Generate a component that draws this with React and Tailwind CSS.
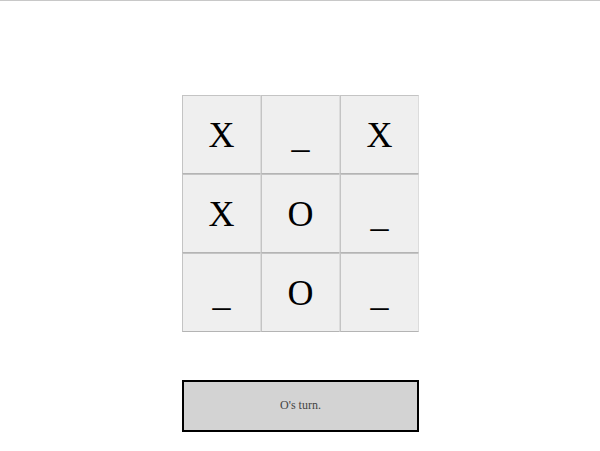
import React, { useState } from "react";

const initial = ["X", "_", "X", "X", "O", "_", "_", "O", "_"];

const App = () => {
    const [cells] = useState(initial);

    return (
        <div className="min-h-[451px] bg-white border-t border-[#c8c8c8] flex flex-col items-center pt-[94px]" style={{ fontFamily: '"Liberation Serif", serif' }}>
            <div className="grid grid-cols-[repeat(3,79px)] grid-rows-[repeat(3,79px)] ml-[1px]">
                {cells.map((c, i) => (
                    <button
                        key={i}
                        className="flex items-center justify-center bg-[#efefef] border border-t-[#c4c4c4] border-l-[#c4c4c4] border-r-[#dcdcdc] border-b-[#b4b4b4] text-[36px] leading-none text-black"
                    >
                        {c}
                    </button>
                ))}
            </div>
            <div className="mt-[48px] ml-[1px] w-[237px] h-[52px] border-2 border-black bg-[#d3d3d3] flex items-center justify-center pb-[2px] text-[12px] text-[#444]">
                O's turn.
            </div>
        </div>
    );
};

export default App;
